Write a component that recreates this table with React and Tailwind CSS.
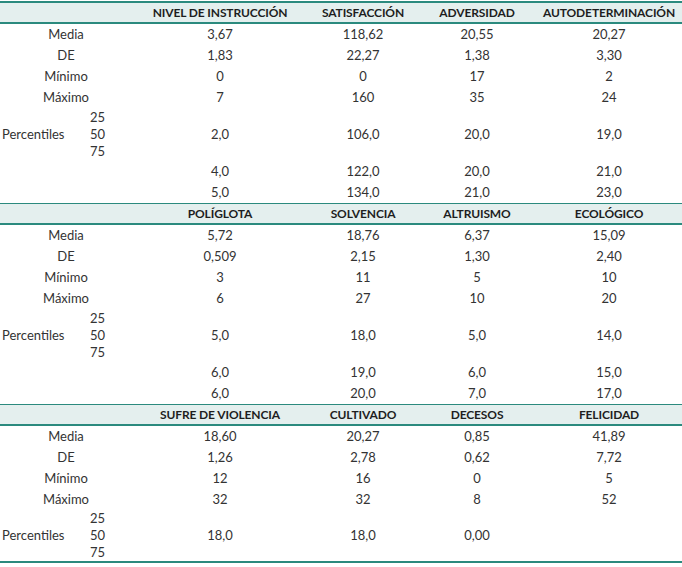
import React from "react";

const sections = [
  {
    first: true,
    heads: ["NIVEL DE INSTRUCCIÓN", "SATISFACCIÓN", "ADVERSIDAD", "AUTODETERMINACIÓN"],
    rows: [
      ["Media", "3,67", "118,62", "20,55", "20,27"],
      ["DE", "1,83", "22,27", "1,38", "3,30"],
      ["Mínimo", "0", "0", "17", "2"],
      ["Máximo", "7", "160", "35", "24"],
    ],
    pct: ["2,0", "106,0", "20,0", "19,0"],
    extra: [
      ["4,0", "122,0", "20,0", "21,0"],
      ["5,0", "134,0", "21,0", "23,0"],
    ],
    blockH: "h-[53px]",
  },
  {
    heads: ["POLÍGLOTA", "SOLVENCIA", "ALTRUISMO", "ECOLÓGICO"],
    rows: [
      ["Media", "5,72", "18,76", "6,37", "15,09"],
      ["DE", "0,509", "2,15", "1,30", "2,40"],
      ["Mínimo", "3", "11", "5", "10"],
      ["Máximo", "6", "27", "10", "20"],
    ],
    pct: ["5,0", "18,0", "5,0", "14,0"],
    extra: [
      ["6,0", "19,0", "6,0", "15,0"],
      ["6,0", "20,0", "7,0", "17,0"],
    ],
    blockH: "h-[53px]",
  },
  {
    last: true,
    heads: ["SUFRE DE VIOLENCIA", "CULTIVADO", "DECESOS", "FELICIDAD"],
    rows: [
      ["Media", "18,60", "20,27", "0,85", "41,89"],
      ["DE", "1,26", "2,78", "0,62", "7,72"],
      ["Mínimo", "12", "16", "0", "5"],
      ["Máximo", "32", "32", "8", "52"],
    ],
    pct: ["18,0", "18,0", "0,00", ""],
    extra: [],
    blockH: "h-[51px]",
  },
];

const grid = "grid grid-cols-[132px_176px_110px_118px_146px]";

function Section({ s }) {
  return (
    <div className={s.last ? "border-b-2 border-[#2b8a7e]" : ""}>
      <div
        className={`${grid} h-[19px] items-center bg-[#e4efee] ${
          s.first ? "border-t-2" : "border-t"
        } border-b-2 border-[#2b8a7e] box-content`}
      >
        <div />
        {s.heads.map((h, i) => (
          <div key={i} className="text-center font-bold text-[12px] tracking-[-0.01em] text-[#1e1e1e] leading-none pt-px whitespace-nowrap">
            {h}
          </div>
        ))}
      </div>
      {s.rows.map((r, i) => (
        <div key={i} className={`${grid} h-[21px] items-center`}>
          {r.map((c, j) => (
            <div key={j} className="text-center leading-none">
              {c}
            </div>
          ))}
        </div>
      ))}
      <div className={`${grid} ${s.blockH} items-center`}>
        <div className="flex items-center h-full">
          <div className="w-[90px] pl-[2px]">Percentiles</div>
          <div className="flex flex-col leading-[17px]">
            <span>25</span>
            <span>50</span>
            <span>75</span>
          </div>
        </div>
        {s.pct.map((c, j) => (
          <div key={j} className="text-center leading-none">
            {c}
          </div>
        ))}
      </div>
      {s.extra.map((r, i) => (
        <div key={i} className={`${grid} h-[21px] items-center`}>
          <div />
          {r.map((c, j) => (
            <div key={j} className="text-center leading-none">
              {c}
            </div>
          ))}
        </div>
      ))}
    </div>
  );
}

export default function App() {
  return (
    <div
      className="w-[682px] h-[567px] bg-white pt-px text-[13px] text-[#333333]"
      style={{ fontFamily: "Lato, 'Open Sans', sans-serif" }}
    >
      {sections.map((s, i) => (
        <Section key={i} s={s} />
      ))}
    </div>
  );
}
